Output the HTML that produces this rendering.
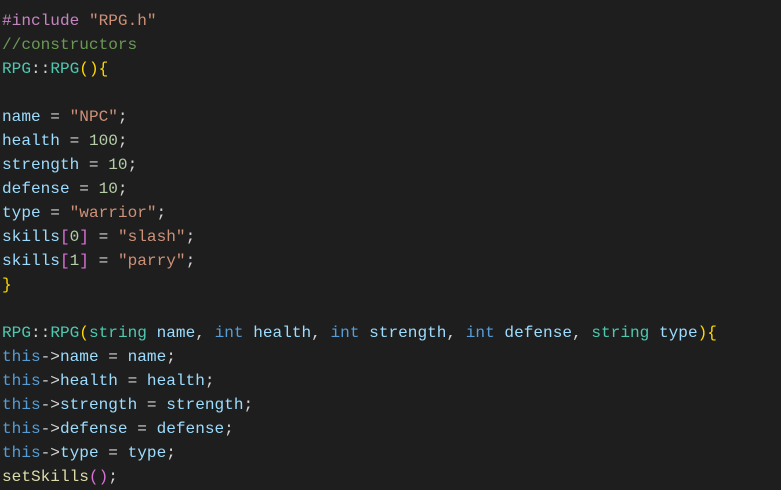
<!DOCTYPE html>
<html><head><meta charset="utf-8"><style>
html,body{margin:0;padding:0;background:#1e1e1e;width:781px;height:490px;overflow:hidden}
pre{margin:0;padding:9px 0 0 2px;font-family:"Liberation Mono",monospace;font-size:16.1px;line-height:24px;color:#d4d4d4;white-space:pre}
.p{color:#c586c0}.s{color:#ce9178}.c{color:#6a9955}.t{color:#4ec9b0}.y{color:#ffd700}.v{color:#9cdcfe}.n{color:#b5cea8}.k{color:#569cd6}.f{color:#dcdcaa}.m{color:#da70d6}
</style></head><body><pre><span class="p">#include</span> <span class="s">"RPG.h"</span>
<span class="c">//constructors</span>
<span class="t">RPG</span>::<span class="t">RPG</span><span class="y">(){</span>

<span class="v">name</span> = <span class="s">"NPC"</span>;
<span class="v">health</span> = <span class="n">100</span>;
<span class="v">strength</span> = <span class="n">10</span>;
<span class="v">defense</span> = <span class="n">10</span>;
<span class="v">type</span> = <span class="s">"warrior"</span>;
<span class="v">skills</span><span class="m">[</span><span class="n">0</span><span class="m">]</span> = <span class="s">"slash"</span>;
<span class="v">skills</span><span class="m">[</span><span class="n">1</span><span class="m">]</span> = <span class="s">"parry"</span>;
<span class="y">}</span>

<span class="t">RPG</span>::<span class="t">RPG</span><span class="y">(</span><span class="t">string</span> <span class="v">name</span>, <span class="k">int</span> <span class="v">health</span>, <span class="k">int</span> <span class="v">strength</span>, <span class="k">int</span> <span class="v">defense</span>, <span class="t">string</span> <span class="v">type</span><span class="y">){</span>
<span class="k">this</span>-&gt;<span class="v">name</span> = <span class="v">name</span>;
<span class="k">this</span>-&gt;<span class="v">health</span> = <span class="v">health</span>;
<span class="k">this</span>-&gt;<span class="v">strength</span> = <span class="v">strength</span>;
<span class="k">this</span>-&gt;<span class="v">defense</span> = <span class="v">defense</span>;
<span class="k">this</span>-&gt;<span class="v">type</span> = <span class="v">type</span>;
<span class="f">setSkills</span><span class="m">()</span>;
<span class="y">}</span>
</pre></body></html>
